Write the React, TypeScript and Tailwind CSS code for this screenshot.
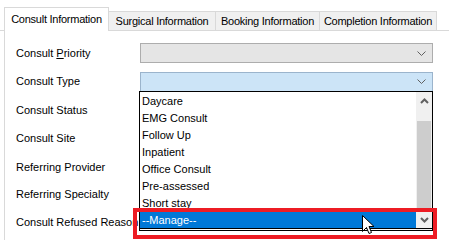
const tabs = [
  { label: 'Consult Information', w: 'w-[105px]', active: true },
  { label: 'Surgical Information', w: 'w-[107px]', active: false },
  { label: 'Booking Information', w: 'w-[104px]', active: false },
  { label: 'Completion Information', w: 'w-[117px]', active: false },
];

// row heights picked so each label sits where the reference has it
const fields = [
  { label: 'Consult Priority', h: 'h-[28px]' },
  { label: 'Consult Type', h: 'h-[29px]' },
  { label: 'Consult Status', h: 'h-[28px]' },
  { label: 'Consult Site', h: 'h-[29px]' },
  { label: 'Referring Provider', h: 'h-[28px]' },
  { label: 'Referring Specialty', h: 'h-[26px]' },
  { label: 'Consult Refused Reason', h: 'h-[30px]' },
];

const options = [
  'Daycare',
  'EMG Consult',
  'Follow Up',
  'Inpatient',
  'Office Consult',
  'Pre-assessed',
  'Short stay',
];

function Chevron() {
  return (
    <svg width="9" height="5" viewBox="0 0 9 5">
      <path d="M0.5 0.5 L4.5 4.5 L8.5 0.5" fill="none" stroke="#606060" strokeWidth="1" />
    </svg>
  );
}

export default function App() {
  return (
    <div
      className="relative w-[449px] h-[240px] overflow-hidden bg-white text-[11px] text-black"
      style={{ fontFamily: '"Liberation Sans", Arial, sans-serif' }}
    >
      {/* Tab strip */}
      <div className="flex items-end h-[31px] pl-[4px] border-b border-[#d9d9d9] tracking-[-0.25px]">
        {tabs.map((t) =>
          t.active ? (
            <div
              key={t.label}
              className={`${t.w} h-[24px] -mb-px flex items-center justify-center bg-white border border-b-0 border-[#d9d9d9]`}
            >
              {t.label}
            </div>
          ) : (
            <div
              key={t.label}
              className={`${t.w} h-[19px] flex items-center justify-center bg-[#f0f0f0] border border-b-0 border-l-0 border-[#d9d9d9]`}
            >
              {t.label}
            </div>
          )
        )}
      </div>

      {/* Panel */}
      <div className="ml-[4px] h-[209px] border-l border-[#d9d9d9] pt-[8px]">
        {fields.map((f, i) => (
          <div key={f.label} className={`flex items-center ${f.h}`}>
            <div className="w-[123px] pl-[11px] whitespace-nowrap">
              {i === 0 ? (
                <>
                  Consult <span className="underline">P</span>riority
                </>
              ) : (
                f.label
              )}
            </div>
            {i === 0 && (
              <div className="ml-[12px] w-[293px] h-[20px] flex items-center justify-end pr-[6px] bg-[#e5e5e5] border border-[#adadad]">
                <Chevron />
              </div>
            )}
            {i === 1 && (
              <div className="ml-[12px] w-[293px] h-[20px] flex items-center justify-end pr-[6px] bg-[#cce4f7] border border-[#9bb4cc]">
                <Chevron />
              </div>
            )}
          </div>
        ))}
      </div>

      {/* Open dropdown list */}
      <div className="absolute left-[139px] top-[91px] w-[294px] h-[140px] bg-white border border-black flex">
        <div className="flex-1 pt-px">
          {options.map((o) => (
            <div key={o} className="h-[17px] flex items-center pl-[2px]">
              {o}
            </div>
          ))}
        </div>
        <div className="w-[16px] bg-[#f0f0f0] flex flex-col">
          <div className="h-[29px] flex items-start justify-center pt-[6px]">
            <svg width="9" height="6" viewBox="0 0 9 6">
              <path d="M1 5 L4.5 1.5 L8 5" fill="none" stroke="#606060" strokeWidth="2" />
            </svg>
          </div>
          <div className="mx-px h-[90px] bg-[#cdcdcd]" />
        </div>
      </div>

      {/* Focused Consult Refused Reason combo */}
      <div className="absolute left-[140px] top-[212px] w-[292px] h-[17px] flex border-b border-black">
        <div className="flex-1 bg-[#0078d7] text-white flex items-center pl-[2px]">
          --Manage--
        </div>
        <div className="w-[16px] bg-[#f0f0f0] flex items-center justify-center">
          <svg width="9" height="6" viewBox="0 0 9 6">
            <path d="M1 1 L4.5 4.5 L8 1" fill="none" stroke="#606060" strokeWidth="2" />
          </svg>
        </div>
      </div>

      {/* Red highlight box */}
      <div className="absolute left-[133px] top-[208px] w-[304px] h-[31px] border-[4px] border-[#ed1c24]" />

      {/* Mouse cursor */}
      <svg className="absolute left-[362px] top-[215px]" width="13" height="21" viewBox="0 0 13 21">
        <path
          d="M0.5 0.5 L0.5 16.5 L4.5 12.5 L7 18.5 L9.5 17.5 L7 11.5 L12 11.5 Z"
          fill="white"
          stroke="black"
          strokeWidth="1"
        />
      </svg>
    </div>
  );
}
